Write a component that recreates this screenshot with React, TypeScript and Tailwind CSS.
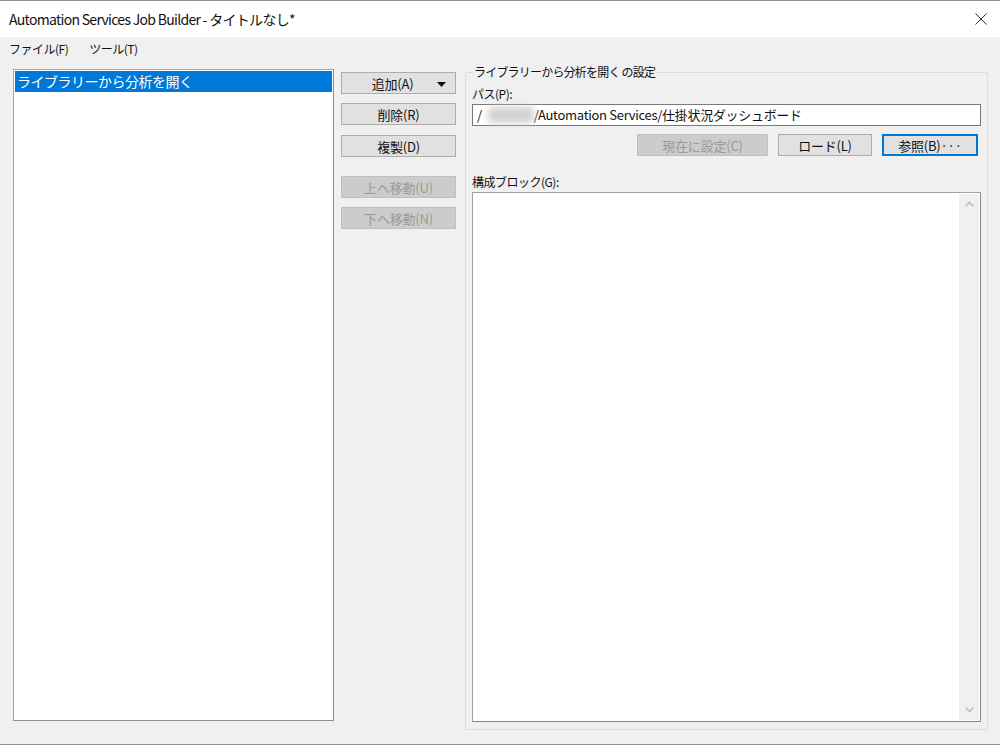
import React from "react";

const jp = { fontFamily: '"Noto Sans CJK JP", "Noto Sans", sans-serif' } as React.CSSProperties;

function Btn({
  children,
  className = "",
  disabled = false,
  focused = false,
}: {
  children: React.ReactNode;
  className?: string;
  disabled?: boolean;
  focused?: boolean;
}) {
  const base = disabled
    ? "bg-[#cccccc] border-[#bfbfbf] text-[#9a9a9a]"
    : focused
    ? "bg-[#e1e1e1] border-[#0078d7] border-2 text-[#111]"
    : "bg-[#e1e1e1] border-[#adadad] text-[#111]";
  return (
    <div
      className={`relative flex items-center justify-center border h-[22px] text-[13px] leading-none tracking-[-0.2px] ${base} ${className}`}
    >
      {children}
    </div>
  );
}

export default function App() {
  return (
    <div
      style={jp}
      className="w-[1000px] h-[745px] bg-[#f0f0f0] flex flex-col border-t border-b border-[#8f8f8f] overflow-hidden text-[#111]"
    >
      {/* Title bar */}
      <div className="h-[36px] bg-white flex items-center justify-between pl-[9px] pr-[12px] shrink-0">
        <div className="text-[14px] tracking-[-0.7px] text-[#111]">
          Automation Services Job Builder - タイトルなし*
        </div>
        <svg width="12" height="12" viewBox="0 0 12 12" className="mr-[1px]">
          <path d="M0.5 0.5 L11.5 11.5 M11.5 0.5 L0.5 11.5" stroke="#333" strokeWidth="1" fill="none" />
        </svg>
      </div>

      {/* Menu bar */}
      <div className="h-[23px] flex items-center pl-[9px] gap-[21px] text-[12px] tracking-[-0.5px] shrink-0 bg-[#f0f0f0]">
        <span>ファイル(F)</span>
        <span>ツール(T)</span>
      </div>

      {/* Body */}
      <div className="flex pl-[13px] pt-[9px]">
        {/* Left list */}
        <div className="w-[321px] h-[652px] bg-white border border-[#a4a4a4] border-r-[#8f8f8f] border-b-[#8f8f8f] p-[1px]">
          <div className="h-[21px] bg-[#0078d7] text-white text-[14px] leading-[21px] pl-[2px] tracking-[-0.5px]">
            ライブラリーから分析を開く
          </div>
        </div>

        {/* Button column */}
        <div className="ml-[7px] mt-[3px] w-[115px] flex flex-col">
          <Btn>
            <span className="mr-[12px]">追加(A)</span>
            <svg width="9" height="5" viewBox="0 0 9 5" className="absolute right-[9px] top-[9px]">
              <path d="M0 0 L9 0 L4.5 5 Z" fill="#111" />
            </svg>
          </Btn>
          <Btn className="mt-[9px]">削除(R)</Btn>
          <Btn className="mt-[10px]">複製(D)</Btn>
          <Btn className="mt-[19px]" disabled>
            上へ移動(U)
          </Btn>
          <Btn className="mt-[9px]" disabled>
            下へ移動(N)
          </Btn>
        </div>

        {/* Group box */}
        <fieldset className="ml-[9px] mt-[-5px] w-[523px] h-[666px] border border-[#dcdcdc] rounded-[2px] px-[6px] pb-[7px] flex flex-col min-w-0">
          <legend className="px-[1px] ml-[1px] text-[12px] tracking-[-0.8px] leading-[16px]">
            ライブラリーから分析を開く の設定
          </legend>
          <div className="text-[12px] tracking-[-0.5px] leading-[14px] mt-[7px]">パス(P):</div>
          <div className="mt-[3px] w-[509px] h-[22px] bg-white border border-[#7a7a7a] flex items-center pl-[4px] text-[13px] tracking-[-0.3px] whitespace-nowrap">
            <span>/</span>
            <span className="ml-[6px] w-[46px] h-[16px] bg-[#d4d4d4] blur-[3px] rounded-sm" />
            <span>/Automation Services/仕掛状況ダッシュボード</span>
          </div>
          <div className="mt-[8px] flex justify-end pr-[3px] gap-[10px]">
            <Btn disabled className="w-[131px]">
              現在に設定(C)
            </Btn>
            <Btn className="w-[94px]">ロード(L)</Btn>
            <Btn focused className="w-[96px]">
              参照(B)···
            </Btn>
          </div>
          <div className="text-[12px] tracking-[-0.5px] leading-[14px] mt-[19px]">構成ブロック(G):</div>
          <div className="mt-[3px] w-[509px] flex-1 bg-white border border-[#a0a0a0] border-r-[#8a8a8a] border-b-[#8a8a8a] flex justify-end p-[1px]">
            <div className="w-[20px] h-full bg-[#f0f0f0] flex flex-col justify-between items-center py-[7px]">
              <svg width="9" height="6" viewBox="0 0 9 6">
                <path d="M0.8 5.2 L4.5 1.5 L8.2 5.2" stroke="#bdbdbd" strokeWidth="1.6" fill="none" />
              </svg>
              <svg width="9" height="6" viewBox="0 0 9 6">
                <path d="M0.8 0.8 L4.5 4.5 L8.2 0.8" stroke="#bdbdbd" strokeWidth="1.6" fill="none" />
              </svg>
            </div>
          </div>
        </fieldset>
      </div>
    </div>
  );
}
